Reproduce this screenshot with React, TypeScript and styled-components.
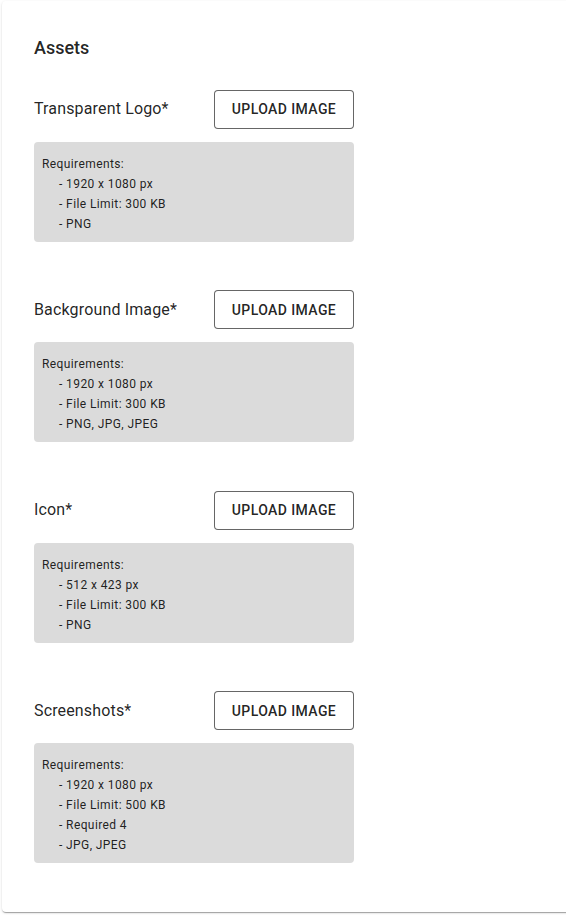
import React from 'react';
import styled, {createGlobalStyle} from "styled-components";

const assets = [
    {label: "Transparent Logo*", requirements: ["1920 x 1080 px", "File Limit: 300 KB", "PNG"]},
    {label: "Background Image*", requirements: ["1920 x 1080 px", "File Limit: 300 KB", "PNG, JPG, JPEG"]},
    {label: "Icon*", requirements: ["512 x 423 px", "File Limit: 300 KB", "PNG"]},
    {label: "Screenshots*", requirements: ["1920 x 1080 px", "File Limit: 500 KB", "Required 4", "JPG, JPEG"]},
];

export default function App() {
    return <>
        <GlobalStyle/>
        <StyledPage>
            <StyledCard>
                <StyledTitle>Assets</StyledTitle>
                {assets.map(asset => (
                    <StyledSection key={asset.label}>
                        <StyledRow>
                            <StyledLabel>{asset.label}</StyledLabel>
                            <StyledButton type="button">Upload image</StyledButton>
                        </StyledRow>
                        <StyledRequirements>
                            <p>Requirements:</p>
                            {asset.requirements.map(item => (
                                <StyledItem key={item}>- {item}</StyledItem>
                            ))}
                        </StyledRequirements>
                    </StyledSection>
                ))}
            </StyledCard>
        </StyledPage>
    </>
}

const GlobalStyle = createGlobalStyle`
  html, body {
    margin: 0;
    background: #ffffff;
    overflow: hidden;
  }

  body {
    font-family: Roboto, "Liberation Sans", sans-serif;
    color: rgba(0, 0, 0, 0.87);
  }
`

// the card runs on past the right edge, so the page clips it
const StyledPage = styled.div`
  overflow: hidden;
  padding: 1px 0 4px 2px;
`

const StyledCard = styled.section`
  box-sizing: border-box;
  width: calc(100% + 40px);
  height: 911px;
  padding: 32px 32px 48px;
  background-color: #ffffff;
  border-radius: 4px;
  box-shadow: 0 2px 1px -1px rgba(0, 0, 0, .2), 0 1px 1px 0 rgba(0, 0, 0, .14), 0 1px 3px 0 rgba(0, 0, 0, .12);
  display: flex;
  flex-direction: column;
  gap: 48.5px;
`

const StyledTitle = styled.h2`
  margin: 0 0 -22px;
  font-size: 18px;
  font-weight: 500;
  line-height: 30px;
`

const StyledSection = styled.div`
  display: flex;
  flex-direction: column;
  gap: 13px;
  width: 320px;
`

const StyledRow = styled.div`
  display: flex;
  align-items: center;
  height: 39px;
`

const StyledLabel = styled.span`
  width: 180px;
  font-size: 16px;
  line-height: 24px;
  letter-spacing: 0.15px;
`

const StyledButton = styled.button`
  box-sizing: border-box;
  width: 140px;
  height: 39px;
  padding: 0;
  background: #ffffff;
  border: 1px solid rgba(0, 0, 0, 0.6);
  border-radius: 4px;
  font-family: Roboto, "Liberation Sans", sans-serif;
  font-size: 14px;
  font-weight: 500;
  letter-spacing: 0.4px;
  text-transform: uppercase;
  color: rgba(0, 0, 0, 0.87);
`

const StyledRequirements = styled.div`
  padding: 12px 8px 8px;
  background-color: #dbdbdb;
  border-radius: 4px;
  font-size: 12px;
  line-height: 20px;
  letter-spacing: 0.4px;

  p {
    margin: 0;
  }
`

const StyledItem = styled.p`
  padding-left: 17px;
`
